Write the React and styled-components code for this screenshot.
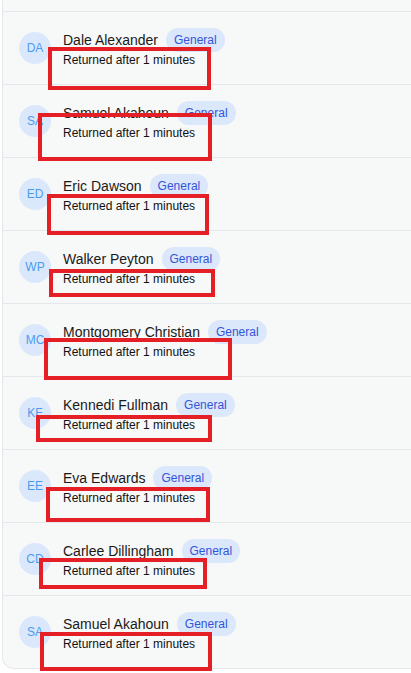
import React from 'react'
import styled, { createGlobalStyle } from 'styled-components'

const GlobalStyle = createGlobalStyle`
  html, body {
    margin: 0;
    padding: 0;
    background: #ffffff;
    overflow: hidden;
  }
  body {
    font-family: "Liberation Sans", Arial, sans-serif;
  }
`

const Page = styled.div`
  position: relative;
  width: 411px;
  height: 673px;
  overflow: hidden;
`

const Card = styled.div`
  margin-left: 2px;
  width: 440px;
  background: #f7f8f8;
  border: 1px solid #e4e8ec;
  border-top: none;
  border-radius: 0 0 12px 12px;
`

// bottom of the row scrolled out above
const ScrolledTail = styled.div`
  height: 11px;
  border-bottom: 1px solid #e4e8ec;
`

const Row = styled.div`
  display: flex;
  align-items: center;
  gap: 12px;
  height: 72px;
  padding-left: 16px;
  border-bottom: ${p => (p.$last ? 'none' : '1px solid #e4e8ec')};
`

const Avatar = styled.div`
  flex: none;
  width: 32px;
  height: 32px;
  border-radius: 50%;
  background: #dbe8fc;
  color: #4a9cf0;
  font-size: 12px;
  display: flex;
  align-items: center;
  justify-content: center;
`

const Info = styled.div`
  display: flex;
  flex-direction: column;
`

const NameLine = styled.div`
  display: flex;
  align-items: center;
  gap: 8px;
  height: 24px;
`

const Name = styled.span`
  font-size: 14px;
  color: #1a1a1a;
  white-space: nowrap;
`

const Badge = styled.span`
  height: 24px;
  line-height: 24px;
  padding: 0 8px;
  border-radius: 12px;
  background: #dbe7fb;
  color: #3355d8;
  font-size: 12px;
`

const Status = styled.div`
  font-size: 12px;
  line-height: 16px;
  color: #111111;
`

const Mark = styled.div`
  position: absolute;
  box-sizing: border-box;
  border: 4px solid #e41f26;
  pointer-events: none;
`

const people = [
  { name: 'Dale Alexander', initials: 'DA' },
  { name: 'Samuel Akahoun', initials: 'SA' },
  { name: 'Eric Dawson', initials: 'ED' },
  { name: 'Walker Peyton', initials: 'WP' },
  { name: 'Montgomery Christian', initials: 'MC' },
  { name: 'Kennedi Fullman', initials: 'KF' },
  { name: 'Eva Edwards', initials: 'EE' },
  { name: 'Carlee Dillingham', initials: 'CD' },
  { name: 'Samuel Akahoun', initials: 'SA' },
]

// annotation boxes drawn over the screenshot: [left, top, right, bottom]
const marks = [
  [48, 47, 211, 90],
  [38, 113, 212, 161],
  [47, 194, 209, 235],
  [49, 269, 215, 297],
  [44, 338, 232, 380],
  [36, 415, 212, 442],
  [46, 487, 210, 522],
  [39, 558, 207, 589],
  [40, 632, 212, 671],
]

export default function App() {
  return (
    <Page>
      <GlobalStyle />
      <Card>
        <ScrolledTail />
        {people.map((p, i) => (
          <Row key={i} $last={i === people.length - 1}>
            <Avatar>{p.initials}</Avatar>
            <Info>
              <NameLine>
                <Name>{p.name}</Name>
                <Badge>General</Badge>
              </NameLine>
              <Status>Returned after 1 minutes</Status>
            </Info>
          </Row>
        ))}
      </Card>
      {marks.map(([l, t, r, b], i) => (
        <Mark key={i} style={{ left: l, top: t, width: r - l, height: b - t }} />
      ))}
    </Page>
  )
}
